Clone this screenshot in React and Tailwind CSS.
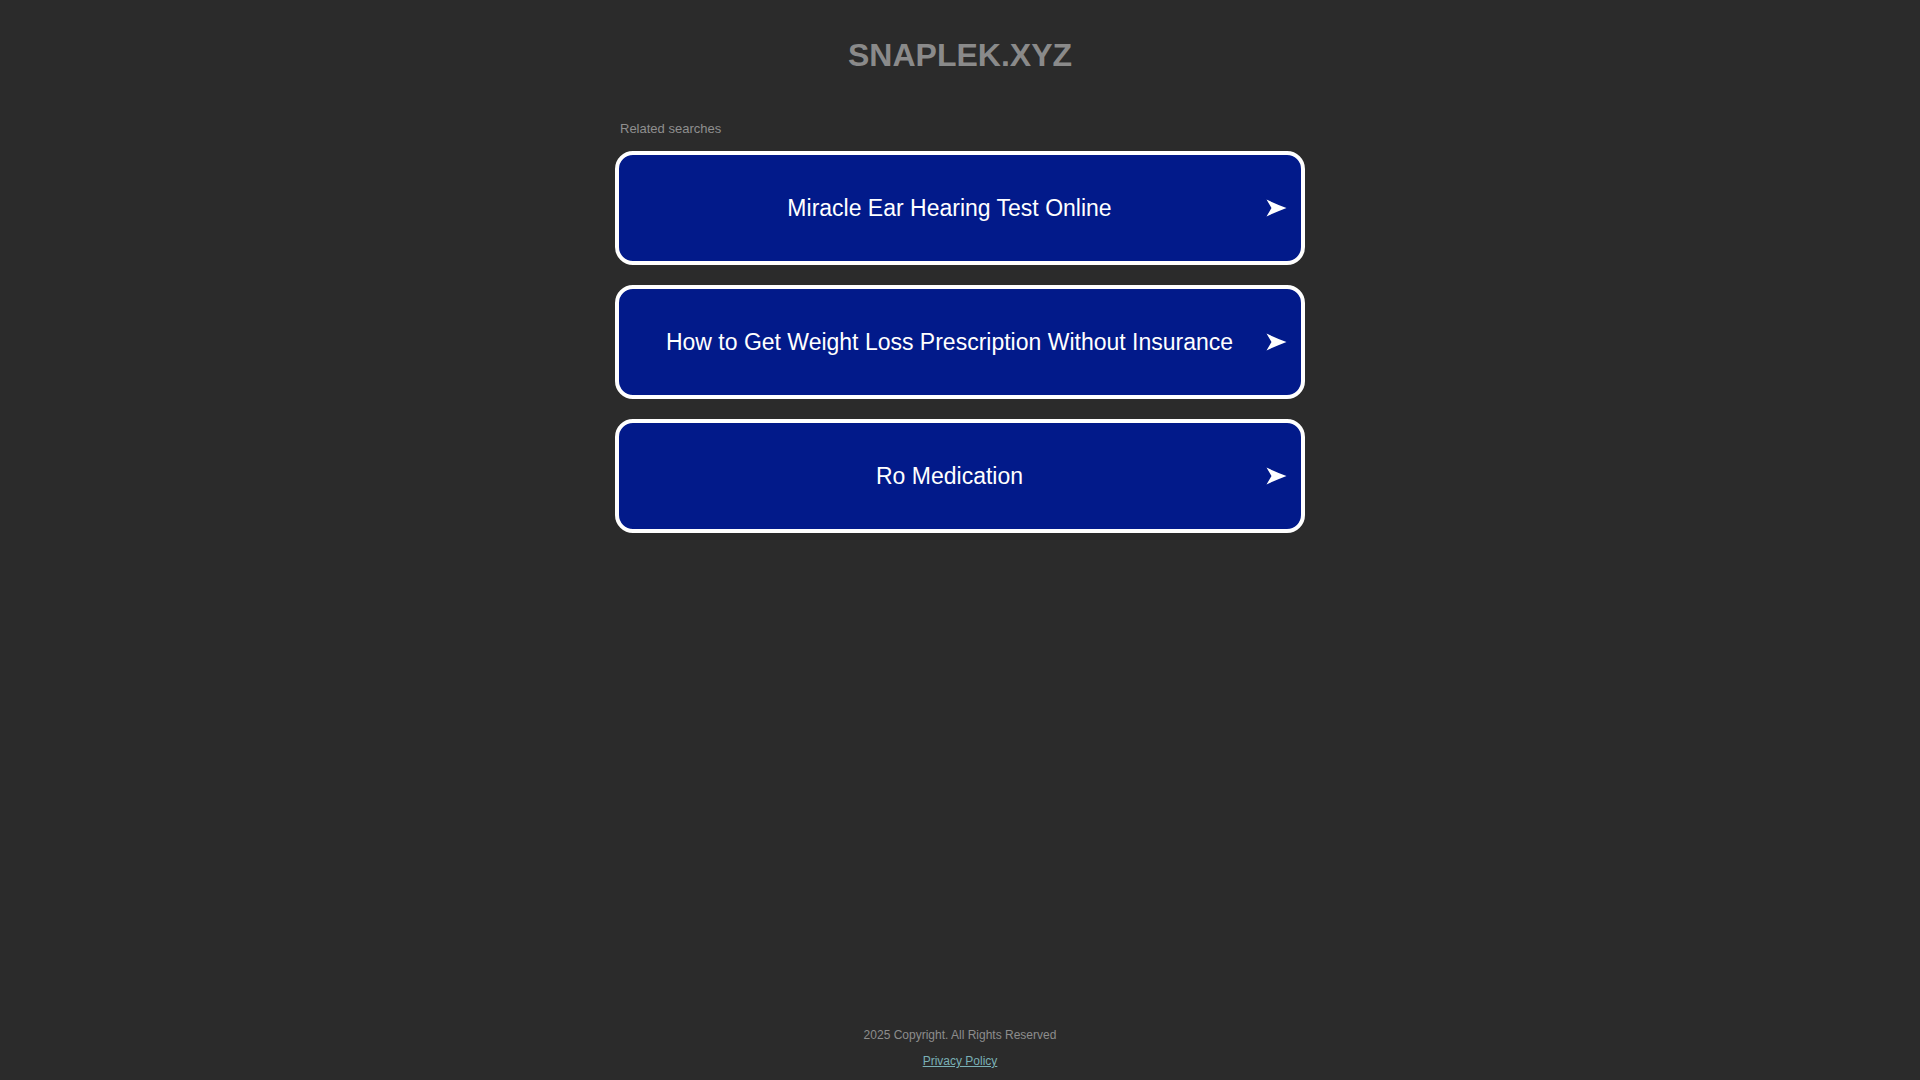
const searches = [
  'Miracle Ear Hearing Test Online',
  'How to Get Weight Loss Prescription Without Insurance',
  'Ro Medication',
];

function Arrow() {
  return (
    <svg width="21" height="18" viewBox="0 0 21 18" className="shrink-0">
      <path d="M0.5 0.5 Q10 5 20.5 9 Q10 13 0.5 17.5 L5.5 9 Z" fill="#ffffff" />
    </svg>
  );
}

function SearchCard({ label }) {
  return (
    <a
      href="#"
      className="flex items-center h-[114px] rounded-[18px] border-4 border-white bg-[#021a8a] text-white no-underline"
    >
      <span className="flex-1 pl-[15px] text-center text-[23px] leading-[28px]">{label}</span>
      <span className="mr-[14px] w-[22px] flex justify-center">
        <Arrow />
      </span>
    </a>
  );
}

export default function App() {
  return (
    <div className="h-screen flex flex-col items-center bg-[#2b2b2b] font-['Liberation_Sans',Arial,sans-serif]">
      <h1 className="pt-[37px] text-[32px] leading-[36px] font-bold text-[#8a8a8a]">SNAPLEK.XYZ</h1>

      <div className="w-[690px] mt-[48px]">
        <p className="pl-[5px] text-[13px] leading-[16px] text-[#8f8f8f]">Related searches</p>
        <div className="mt-[14px] flex flex-col gap-[20px]">
          {searches.map(s => (
            <SearchCard key={s} label={s} />
          ))}
        </div>
      </div>

      <footer className="mt-auto pb-[11px] flex flex-col items-center gap-[11px] text-[12px] leading-[15px]">
        <p className="text-[#8d8d8d]">2025 Copyright. All Rights Reserved</p>
        <a href="#" className="underline text-[#7ab0b6]">Privacy Policy</a>
      </footer>
    </div>
  );
}
